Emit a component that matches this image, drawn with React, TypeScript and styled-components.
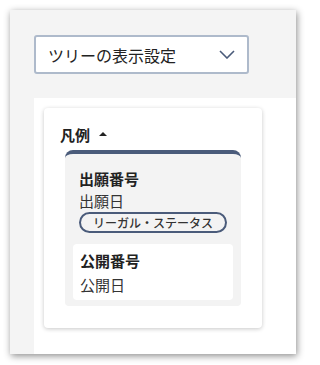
import React from 'react';
import styled, { createGlobalStyle } from 'styled-components';

const GlobalStyle = createGlobalStyle`
  html, body {
    margin: 0;
    padding: 0;
    background: #ffffff;
  }
  body {
    font-family: "Noto Sans CJK JP", "Noto Sans", sans-serif;
    color: #1f1f1f;
  }
`;

type Item = {
  number: string;
  date: string;
  status?: string;
  selected?: boolean;
};

const items: Item[] = [
  { number: '出願番号', date: '出願日', status: 'リーガル・ステータス', selected: true },
  { number: '公開番号', date: '公開日' },
];

const App = () => {
  return (
    <>
      <GlobalStyle />
      <Page>
        <Frame>
          <Select>
            <SelectLabel>ツリーの表示設定</SelectLabel>
            <svg width="16" height="9" viewBox="0 0 16 9" fill="none">
              <path d="M1 1l7 7 7-7" stroke="#4a5b7a" strokeWidth="1.6" />
            </svg>
          </Select>
          <Panel>
            <Card>
              <LegendHead>
                凡例
                <Caret />
              </LegendHead>
              <LegendList>
                {items.map((item) => (
                  <LegendItem key={item.number} selected={!!item.selected}>
                    <ItemNumber>{item.number}</ItemNumber>
                    <ItemDate compact={!!item.status}>{item.date}</ItemDate>
                    {item.status && <StatusPill>{item.status}</StatusPill>}
                  </LegendItem>
                ))}
              </LegendList>
            </Card>
          </Panel>
        </Frame>
      </Page>
    </>
  );
};

export default App;

const Page = styled.div`
  width: 306px;
  height: 365px;
  padding: 10px;
  box-sizing: border-box;
`;

const Frame = styled.div`
  width: 286px;
  height: 344px;
  background: #f4f4f4;
  box-shadow: 1px 2px 7px rgba(0, 0, 0, 0.45);
  padding: 25px 0 0 24px;
  box-sizing: border-box;
  display: flex;
  flex-direction: column;
`;

const Select = styled.div`
  width: 215px;
  height: 39px;
  box-sizing: border-box;
  border: 2px solid #aebacb;
  border-radius: 3px;
  background: #ffffff;
  display: flex;
  align-items: center;
  justify-content: space-between;
  padding: 0 12px 0 12px;
`;

const SelectLabel = styled.span`
  font-size: 16px;
  color: #222;
  letter-spacing: 0;
`;

const Panel = styled.div`
  flex: 1;
  margin-top: 24px;
  background: #ffffff;
  padding: 10px 0 0 10px;
`;

const Card = styled.div`
  width: 218px;
  height: 220px;
  box-sizing: border-box;
  background: #ffffff;
  border-radius: 4px;
  box-shadow: 0 1px 4px rgba(0, 0, 0, 0.22);
  padding: 15px 21px 0 21px;
`;

const LegendHead = styled.div`
  display: flex;
  align-items: center;
  margin-left: -5px;
  font-size: 15px;
  font-weight: 700;
  line-height: 24px;
  color: #222;
`;

const Caret = styled.span`
  width: 0;
  height: 0;
  margin-left: 9px;
  margin-top: -2px;
  border-left: 4px solid transparent;
  border-right: 4px solid transparent;
  border-bottom: 4px solid #222;
`;

const LegendList = styled.div`
  margin-top: 3px;
  background: #f3f3f3;
  border-top: 4px solid #4a5b7a;
  border-radius: 8px 8px 4px 4px;
  padding: 8px 8px 6px 8px;
  display: flex;
  flex-direction: column;
  gap: 4px;
`;

const LegendItem = styled.div<{ selected: boolean }>`
  background: ${(p) => (p.selected ? 'transparent' : '#ffffff')};
  border-radius: 4px;
  padding: ${(p) => (p.selected ? '5px 7px 7px 6px' : '5px 7px 3px 7px')};
  display: flex;
  flex-direction: column;
  align-items: flex-start;
`;

const ItemNumber = styled.div`
  font-size: 15px;
  font-weight: 700;
  line-height: 24px;
  color: #222;
`;

const ItemDate = styled.div<{ compact: boolean }>`
  font-size: 15px;
  line-height: ${(p) => (p.compact ? '20px' : '24px')};
  margin-bottom: ${(p) => (p.compact ? '1px' : '0')};
  color: #333;
`;

const StatusPill = styled.div`
  border: 2px solid #4a5b7a;
  border-radius: 12px;
  padding: 0 12px;
  font-size: 12px;
  line-height: 17px;
  white-space: nowrap;
  color: #333;
  font-weight: 500;
`;
